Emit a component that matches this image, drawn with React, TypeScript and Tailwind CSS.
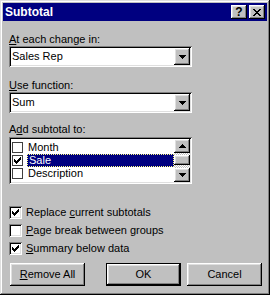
const raised =
  "shadow-[inset_-1px_-1px_#000,inset_1px_1px_#fff,inset_-2px_-2px_#808080,inset_2px_2px_#dfdfdf]";
const sunken =
  "shadow-[inset_1px_1px_#808080,inset_-1px_-1px_#fff,inset_2px_2px_#000,inset_-2px_-2px_#dfdfdf]";

function Check() {
  // classic 7x7 check mark, pixel by pixel
  const px = [
    [6, 0],
    [5, 1], [6, 1],
    [0, 2], [4, 2], [5, 2], [6, 2],
    [0, 3], [1, 3], [3, 3], [4, 3], [5, 3],
    [0, 4], [1, 4], [2, 4], [3, 4], [4, 4],
    [1, 5], [2, 5], [3, 5],
    [2, 6],
  ];
  return (
    <svg width="7" height="7" viewBox="0 0 7 7" shapeRendering="crispEdges">
      {px.map(([x, y]) => (
        <rect key={`${x}-${y}`} x={x} y={y} width="1" height="1" fill="#000" />
      ))}
    </svg>
  );
}

function Arrow({ up }: { up?: boolean }) {
  return (
    <svg width="7" height="4" viewBox="0 0 7 4" shapeRendering="crispEdges">
      {up ? (
        <path d="M3 0h1v1h1v1h1v1h1v1H0V3h1V2h1V1h1z" fill="#000" />
      ) : (
        <path d="M0 0h7v1H6v1H5v1H4v1H3V3H2V2H1V1H0z" fill="#000" />
      )}
    </svg>
  );
}

function Combo({ value }: { value: string }) {
  return (
    <div className={`w-[183px] h-[21px] bg-white p-[2px] flex ${sunken}`}>
      <div className="flex-1 pl-[1px] flex items-center">{value}</div>
      <div className={`w-[16px] h-[17px] bg-[#c0c0c0] flex items-center justify-center ${raised}`}>
        <Arrow />
      </div>
    </div>
  );
}

function Box({ checked }: { checked?: boolean }) {
  return (
    <div className={`w-[13px] h-[13px] bg-white flex items-center justify-center ${sunken}`}>
      {checked && <Check />}
    </div>
  );
}

function Btn({ children, def }: { children: React.ReactNode; def?: boolean }) {
  return (
    <div
      className={`w-[75px] h-[23px] bg-[#c0c0c0] flex items-center justify-center ${
        def ? "border border-black" : ""
      } ${raised}`}
    >
      {children}
    </div>
  );
}

const items = [
  { label: "Month", checked: false },
  { label: "Sale", checked: true, selected: true },
  { label: "Description", checked: false },
];

export default function App() {
  return (
    <div className="w-[270px] h-[295px] bg-[#c0c0c0] p-[3px] shadow-[inset_-1px_-1px_#000,inset_1px_1px_#dfdfdf,inset_-2px_-2px_#808080,inset_2px_2px_#fff] font-['Liberation_Sans',Arial,sans-serif] text-[11px] leading-[13px] text-black select-none">
      {/* TITLE BAR */}
      <div className="h-[18px] bg-[#000080] flex items-center pl-[2px] pr-[2px]">
        <span className="flex-1 text-white font-bold text-[12px]">Subtotal</span>
        <div className={`w-[16px] h-[14px] bg-[#c0c0c0] flex items-center justify-center font-bold text-[12px] leading-[14px] ${raised}`}>
          ?
        </div>
        <div className={`ml-[2px] w-[16px] h-[14px] bg-[#c0c0c0] flex items-center justify-center ${raised}`}>
          <svg width="8" height="7" viewBox="0 0 8 7" shapeRendering="crispEdges">
            <path
              d="M0 0h2v1h1v1h2V1h1V0h2v1H7v1H6v1H5v1h1v1h1v1h1v1H6V6H5V5H3v1H2v1H0V6h1V5h1V4h1V3H2V2H1V1H0z"
              fill="#000"
            />
          </svg>
        </div>
      </div>

      {/* BODY */}
      <div className="pl-[6px] flex flex-col">
        <div className="mt-[12px]">
          <span className="underline">A</span>t each change in:
        </div>
        <Combo value="Sales Rep" />

        <div className="mt-[12px]">
          <span className="underline">U</span>se function:
        </div>
        <Combo value="Sum" />

        <div className="mt-[10px]">
          A<span className="underline">d</span>d subtotal to:
        </div>
        <div className={`mt-[1px] w-[183px] h-[47px] bg-white p-[2px] flex ${sunken}`}>
          <div className="flex-1 pt-[2px] flex flex-col">
            {items.map((it) => (
              <div key={it.label} className="h-[13px] flex items-center">
                <div className="ml-[1px] w-[11px] h-[11px] border border-[#404040] bg-white flex items-center justify-center">
                  {it.checked && <Check />}
                </div>
                <div
                  className={`ml-[4px] flex-1 h-[13px] pl-[1px] flex items-center ${
                    it.selected
                      ? "bg-[#000080] text-white border border-dotted border-[#ffff80] pl-0"
                      : ""
                  }`}
                >
                  {it.label}
                </div>
              </div>
            ))}
          </div>
          <div className="w-[16px] flex flex-col bg-[repeating-conic-gradient(#c0c0c0_0_25%,#fff_0_50%)] bg-[length:2px_2px]">
            <div className={`h-[14px] bg-[#c0c0c0] flex items-center justify-center ${raised}`}>
              <Arrow up />
            </div>
            <div className="h-[2px]" />
            <div className={`h-[10px] bg-[#c0c0c0] ${raised}`} />
            <div className="flex-1" />
            <div className={`h-[14px] bg-[#c0c0c0] flex items-center justify-center ${raised}`}>
              <Arrow />
            </div>
          </div>
        </div>

        <div className="mt-[22px] flex flex-col gap-[5px]">
          <div className="h-[13px] flex items-center gap-[4px]">
            <Box checked />
            <span>
              Replace <span className="underline">c</span>urrent subtotals
            </span>
          </div>
          <div className="h-[13px] flex items-center gap-[4px]">
            <Box />
            <span>
              <span className="underline">P</span>age break between groups
            </span>
          </div>
          <div className="h-[13px] flex items-center gap-[4px]">
            <Box checked />
            <span>
              <span className="underline">S</span>ummary below data
            </span>
          </div>
        </div>

        <div className="mt-[8px] flex">
          <div className="ml-[1px]">
            <Btn>
              <span>
                <span className="underline">R</span>emove All
              </span>
            </Btn>
          </div>
          <div className="ml-[21px]">
            <Btn def>OK</Btn>
          </div>
          <div className="ml-[6px]">
            <Btn>Cancel</Btn>
          </div>
        </div>
      </div>
    </div>
  );
}
